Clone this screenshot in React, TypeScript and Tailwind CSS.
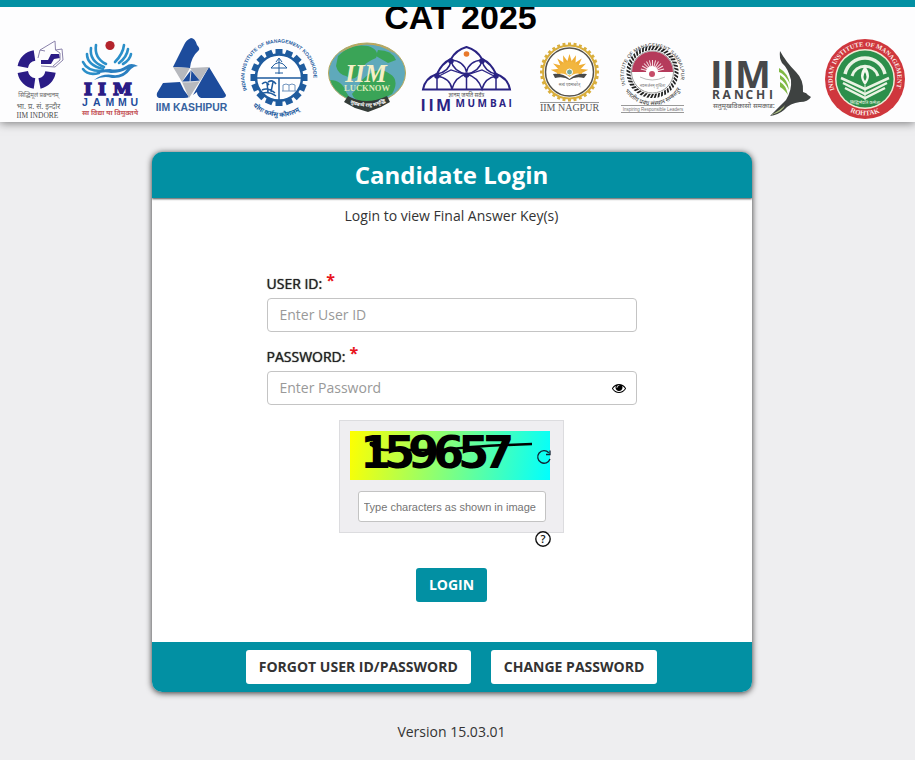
import React, { useState } from "react";

const NAVY = "#2b1c86";
const BLUE = "#1d4c9c";
const STEEL = "#1f5c9e";
const SERIF = "Liberation Serif, serif";
const SANS = "Liberation Sans, sans-serif";
const OPEN = "Open Sans, sans-serif";
const DEVA = "Noto Sans Devanagari, Noto Sans, sans-serif";

function ring(count: number, cx: number, cy: number, draw: (i: number) => React.ReactNode) {
  return Array.from({ length: count }, (_, i) => (
    <g key={i} transform={`rotate(${(i * 360) / count} ${cx} ${cy})`}>
      {draw(i)}
    </g>
  ));
}

function Indore() {
  return (
    <svg role="img" aria-label="IIM Indore" width="62" height="88" viewBox="10 34 62 88">
      <g fill="none" stroke={NAVY} strokeWidth="10.500">
        <path d="M34.500 55.500 A14 14 0 0 0 22.800 67" />
        <path d="M22.800 72 A14 14 0 0 0 34.500 83.500" />
        <path d="M39.500 83.500 A14 14 0 0 0 50.500 72" />
      </g>
      <path d="M41 64 V60 H48 L51 54 H59 L60 58 L54 59 L51 64 Z" fill={NAVY} />
      <g fill="none" stroke="#8b83ab" strokeWidth="1">
        <path d="M38 58 L40 50 L55 41 L55.500 50 L62 49 L63 60 L55 67 L41 66" />
        <path d="M40 50 L45 51 M55.500 50 L60 53 V60 L53 66" />
      </g>
      <text x="38.500" y="97" fontSize="6" textAnchor="middle" fill="#666" fontFamily={DEVA}>सिद्धिमूलं प्रबन्धनम्</text>
      <text x="38.500" y="109" fontSize="7.500" textAnchor="middle" fill="#666" fontFamily={DEVA}>भा. प्र. सं. इन्दौर</text>
      <text x="37.500" y="118" fontSize="7.500" textAnchor="middle" fill="#4b4b4b" fontFamily={SERIF}>IIM INDORE</text>
    </svg>
  );
}

function Jammu() {
  return (
    <svg role="img" aria-label="IIM Jammu" width="75" height="88" viewBox="72 34 75 88">
      <circle cx="110" cy="45.500" r="4.600" fill="#b4242c" />
      <g fill="none" stroke="#2b8fc9" strokeWidth="2.600" strokeLinecap="round">
        <path d="M96 45 Q94 58 106 64" />
        <path d="M91 48 Q89 61 104 67" />
        <path d="M87 54 Q87 65 103 69" />
        <path d="M83 62 Q87 71 101 71" />
        <path d="M83 69 Q88 76 99 73" />
        <path d="M124 45 Q123 54 115 62" />
        <path d="M128 49 Q127 57 119 63" />
        <path d="M131 54 Q130 60 123 64" />
      </g>
      <path d="M94 80 Q104 75 112 78 Q124 79 131 69 Q134 66 138 66 Q131 62 126 66 Q119 71 110 69 Q100 69 96 74 Q104 71 111 73 Q121 73 127 69 Q122 76 113 75 Q103 73 94 80 Z" fill="#2b7fc0" />
      <text x="84 98 113" y="95" fontSize="17" fontWeight="bold" fill={NAVY} stroke={NAVY} strokeWidth="1.500" fontFamily="DejaVu Serif, serif">IIM</text>
      <text x="82 93 105.500 118 130.500" y="105.500" fontSize="10.500" fontWeight="bold" fill={BLUE} fontFamily={SANS}>JAMMU</text>
      <text x="110" y="115" fontSize="7" fontWeight="bold" textAnchor="middle" fill="#c5575b" fontFamily={DEVA}>सा विद्या या विमुक्तये</text>
    </svg>
  );
}

function Kashipur() {
  return (
    <svg role="img" aria-label="IIM Kashipur" width="88" height="88" viewBox="147 34 88 88">
      <path d="M191 38 Q186 40 184 45 L173 67 L190 68 Q191 57 199 50 Q200 48 197 45 Q195 38 191 38 Z" fill={BLUE} />
      <path d="M157 93 L163 83 L180 82 Q183 90 189 97 Q188 98 184 98 L159 98 Q156 97 157 93 Z" fill={BLUE} />
      <path d="M209 67 L226 95 Q226 98 222 98 L201 98 Q197 96 197 92 L193 95 L202 79 Z" fill={BLUE} />
      <path d="M173 67 L190 68 L182 82 Z M190 68 L209 67 L200 81 Z M182 82 L200 81 L189 98 Z" fill="#b7b9be" />
      <path d="M191 70 L200 81 L182 82 Z" fill={BLUE} />
      <path d="M191 70 L190 82 L182 82 M190 82 L200 81" fill="none" stroke="#dadde3" strokeWidth="1" />
      <text x="191.500" y="110.500" fontSize="10.400" fontWeight="bold" textAnchor="middle" fill="#36629f" fontFamily={SANS}>IIM KASHIPUR</text>
    </svg>
  );
}

function Kozhikode() {
  return (
    <svg role="img" aria-label="IIM Kozhikode" width="87" height="88" viewBox="235 34 87 88">
      <path id="kozhi-top" d="M247 90 A34.500 34.500 0 1 1 311 90" fill="none" />
      <path id="kozhi-low" d="M253 106 A38 38 0 0 0 308 104" fill="none" />
      {ring(16, 279, 77.5, () => (
        <rect x="275.500" y="49" width="7" height="6" fill={STEEL} />
      ))}
      <circle cx="279" cy="77.500" r="23" fill="#fff" stroke={STEEL} strokeWidth="2.500" />
      <path d="M256 78 H302 M279 78 V100" stroke={STEEL} strokeWidth="1.500" />
      <g fill="none" stroke={STEEL} strokeWidth="1">
        <path d="M271 68 Q279 57 287 68 M271 68 H287 M279 59 V74 M276 62 L279 58 L282 62 M275 73 H283" />
        <path d="M262 84 Q266 80 269 85 M268 82 Q273 79 276 84 M267 83 L268 92 M273 82 L271 92 M262 90 Q268 87 275 93 M263 93 Q269 91 276 96" strokeWidth="1.500" />
        <path d="M283 91 V85 Q286 83 289 85 Q292 83 295 85 V91 M282 91 H296 M289 85 V91" stroke="#6f93bd" />
      </g>
      <text fontSize="5" fontWeight="bold" fill={STEEL} fontFamily={SANS}>
        <textPath href="#kozhi-top">INDIAN INSTITUTE OF MANAGEMENT KOZHIKODE</textPath>
      </text>
      <text fontSize="6.500" fontWeight="bold" fill={STEEL} fontFamily={DEVA}>
        <textPath href="#kozhi-low">योगः कर्मसु कौशलम्</textPath>
      </text>
    </svg>
  );
}

function Lucknow() {
  return (
    <svg role="img" aria-label="IIM Lucknow" width="92" height="88" viewBox="322 34 92 88">
      <clipPath id="lucknow-globe">
        <ellipse cx="367" cy="73" rx="38" ry="29.500" />
      </clipPath>
      <ellipse cx="367" cy="73" rx="38.500" ry="30" fill="#5fa9bb" stroke="#b9a95a" strokeWidth="1" />
      <g clipPath="url(#lucknow-globe)" fill="#3aa457">
        <path d="M338 56 Q350 43 368 46 Q380 50 376 58 Q366 62 362 68 Q356 84 346 76 Q338 74 336 66 Z" />
        <path d="M378 50 Q392 50 396 60 L388 63 L376 56 Z" />
        <path d="M362 80 Q378 64 390 74 Q400 80 392 94 L372 104 Q354 102 352 94 Q358 88 362 80 Z" />
        <path d="M330 80 Q342 80 346 92 L352 101 L338 98 Z" />
        <path d="M340 52 Q367 35 394 52" fill="none" stroke="#c9a652" strokeWidth="2" />
      </g>
      <text x="366" y="82" fontSize="25" fontWeight="bold" fontStyle="italic" textAnchor="middle" fill="#f5efc6" fontFamily={SERIF}>IIM</text>
      <text x="367" y="91" fontSize="8.500" fontWeight="bold" textAnchor="middle" fill="#dcebb9" fontFamily={SERIF}>LUCKNOW</text>
      <path d="M348 96 Q366 106 387 96 L390 102 L381 107 L368 112 L355 108 L344 102 Z" fill="#343c38" />
      <path id="lucknow-ribbon" d="M350 103 Q367 111 386 102" fill="none" />
      <text fontSize="5" fontWeight="bold" fill="#fff" fontFamily={DEVA}>
        <textPath href="#lucknow-ribbon">सुप्रबन्धे राष्ट्र समृद्धि</textPath>
      </text>
    </svg>
  );
}

function Mumbai() {
  return (
    <svg role="img" aria-label="IIM Mumbai" width="112" height="88" viewBox="414 34 112 88">
      <g fill="none" stroke="#2a2383" strokeWidth="2">
        <path d="M423 89.500 H510 Q508 78 496 74 Q491 63 482 59 Q477 50 466.500 47 Q456 50 451 59 Q442 63 437 74 Q425 78 423 89.500 Z" />
        <path d="M437 76 V89 M466.500 75 V89 M496 76 V89" strokeWidth="1.500" />
        <path d="M437 76 Q450 78 452 89 Q455 77 466.500 74 Q478 77 482 89 Q485 78 496 76" strokeWidth="1.500" />
        <path d="M437 74 Q449 72 451 61 Q454 72 466.500 74 Q479 72 482 61 Q485 72 496 74" strokeWidth="1.500" />
        <path d="M451 60 Q464 61 466.500 72 Q469 61 482 60" strokeWidth="1.500" />
        <path d="M439 76 L451 70 L466.500 75 L482 70 L494 76" strokeWidth="1.200" />
      </g>
      <g fill="#2a2383">
        <circle cx="451" cy="61" r="2.800" /><circle cx="482" cy="61" r="2.800" />
        <circle cx="437" cy="76" r="2.800" /><circle cx="466.500" cy="75" r="2.800" /><circle cx="496" cy="76" r="2.800" />
      </g>
      <circle cx="466.500" cy="54" r="2.800" fill="#e8792b" />
      <text x="466.500" y="96.500" fontSize="5.500" textAnchor="middle" fill="#555" fontFamily={DEVA}>ज्ञानम् जयति सर्वत्र</text>
      <text x="420.500 428.500 436" y="111" fontSize="16" fontWeight="bold" fill="#2a2383" fontFamily={OPEN}>IIM</text>
      <text x="455.500 467.500 477.500 490 499 508.500" y="106.500" fontSize="10" fontWeight="bold" fill="#2a2383" fontFamily={OPEN}>MUMBAI</text>
    </svg>
  );
}

function Nagpur() {
  return (
    <svg role="img" aria-label="IIM Nagpur" width="84" height="88" viewBox="526 34 84 88">
      {ring(32, 569.5, 72, () => (
        <rect x="568" y="42.500" width="3" height="4" fill="#d9ae3c" />
      ))}
      <circle cx="569.500" cy="72" r="26.500" fill="#fff" stroke="#d9ae3c" strokeWidth="2" />
      <circle cx="569.500" cy="72" r="24" fill="#fff" stroke="#55524a" strokeWidth="1.500" />
      {[-80, -60, -40, -20, 0, 20, 40, 60, 80].map((a) => (
        <path key={a} d="M566.500 64 L569.500 54 L572.500 64 Z" fill="#efae35" transform={`rotate(${a} 569.500 73)`} />
      ))}
      <path d="M557 74 A12.500 12.500 0 0 1 582 74 Q574 72 569.500 77 Q565 72 557 74 Z" fill="#f2b63f" />
      <circle cx="569.500" cy="72" r="3" fill="#74a99a" stroke="#fff" strokeWidth="1" />
      <path d="M553 74 Q563 73 569.500 79 Q576 73 587 74 L584 78 Q575 76 569.500 80 Q564 76 555 78 Z" fill="#4a4a48" />
      <text x="569.500" y="86" fontSize="4" textAnchor="middle" fill="#666" fontFamily={DEVA}>सत्यं एवमाचरेत्</text>
      <path d="M540 102.500 H599" stroke="#999" strokeWidth="1" />
      <text x="569.500" y="111" fontSize="10" textAnchor="middle" fill="#555" fontFamily={SERIF}>IIM NAGPUR</text>
    </svg>
  );
}

function Sambalpur() {
  return (
    <svg role="img" aria-label="IIM Sambalpur" width="88" height="88" viewBox="610 34 88 88">
      <path id="samb-top" d="M625.700 85 A28.500 28.500 0 1 1 679.300 85" fill="none" />
      <path id="samb-low" d="M625 91 A33 33 0 0 0 682 87" fill="none" />
      {ring(44, 652.5, 72, () => (
        <path d="M651 50 L653 50 L655 46 L653 46 Z" fill="#222" />
      ))}
      <circle cx="652.500" cy="72" r="21" fill="#fff" stroke="#999" strokeWidth="1" />
      <path d="M632 72 A20.500 20.500 0 0 1 673 72 Z" fill="#b53b5b" />
      {[-75, -60, -45, -30, -15, 0, 15, 30, 45, 60, 75].map((a) => (
        <path key={a} d="M652.500 68 V60" stroke="#f6dce2" strokeWidth="1" transform={`rotate(${a} 652.500 72)`} />
      ))}
      <path d="M646 72 A6 6 0 0 1 658 72 L654 75 H650 Z" fill="#fff" />
      <circle cx="652" cy="74" r="3" fill="#c64d69" />
      <path d="M640 77 Q652 83 665 77" fill="none" stroke="#bbb" strokeWidth="1" />
      <text x="652.500" y="87" fontSize="4" textAnchor="middle" fill="#777" fontFamily={DEVA}>नवसर्जनम् शुचिता</text>
      <text fontSize="5" fill="#333" fontFamily={SANS}>
        <textPath href="#samb-top">INSTITUTE OF MANAGEMENT SAMBALPUR</textPath>
      </text>
      <text fontSize="6" fill="#333" fontFamily={DEVA}>
        <textPath href="#samb-low">भारतीय प्रबंध संस्थान सम्बलपुर</textPath>
      </text>
      <path d="M621 105.500 H684 M621 112.500 H684" stroke="#999" strokeWidth="1" />
      <text x="653" y="111" fontSize="4.500" textAnchor="middle" fill="#777" fontFamily={SANS}>Inspiring Responsible Leaders</text>
    </svg>
  );
}

function Ranchi() {
  return (
    <svg role="img" aria-label="IIM Ranchi" width="120" height="88" viewBox="698 34 120 88">
      <text x="710 722 735" y="88" fontSize="38" fontWeight="bold" fill="#47484a" fontFamily={OPEN}>IIM</text>
      <text x="712 722.500 734 745.500 756 769" y="99" fontSize="12" fontWeight="bold" fill="#47484a" fontFamily={OPEN}>RANCHI</text>
      <text x="744" y="108" fontSize="7" textAnchor="middle" fill="#555" fontFamily={DEVA}>सतुमूखविकासो समकाड:</text>
      <path d="M780 51 Q786 62 796 72 Q804 80 803 92 Q807 93 808 95 L811 97 Q808 102 800 102 Q790 103 784 110 Q778 115 770 116 Q780 106 786 100 Q792 90 791 80 Q788 68 782 63 Q779 58 780 51 Z" fill="#3e4241" />
      <path d="M779 68 Q788 73 790 84 Q785 74 779 72 Z M780 75 Q788 80 789 90 Q785 82 780 79 Z M780 82 Q786 85 788 95 Q784 89 780 87 Z" fill="#80b944" />
      <path d="M771 115 Q782 109 785 105 Q783 112 771 115 Z" fill="#b2c486" />
    </svg>
  );
}

function Rohtak() {
  return (
    <svg role="img" aria-label="IIM Rohtak" width="92" height="88" viewBox="818 34 92 88">
      <path id="rohtak-top" d="M834.500 90 A32.500 32.500 0 1 1 895.500 90" fill="none" />
      <path id="rohtak-low" d="M850 112 A36 36 0 0 0 884 110" fill="none" />
      <circle cx="865" cy="79" r="40" fill="#cf373d" />
      <circle cx="865" cy="79" r="30" fill="#f1ead6" />
      <circle cx="865" cy="79" r="28.500" fill="#2c8f4b" />
      <g fill="none" stroke="#e9f3e3" strokeWidth="3.500">
        <path d="M845 74 A20.500 20.500 0 0 1 885 74" />
        <path d="M852 76 A13.500 13.500 0 0 1 878 76" strokeWidth="3" />
      </g>
      <path d="M865 66 Q873 76 865 85 Q857 76 865 66 Z" fill="#f4f8ee" />
      <path d="M865 72 Q868 77 865 81 Q862 77 865 72 Z" fill="#2c8f4b" />
      <g fill="none" stroke="#e9f3e3" strokeWidth="2.500">
        <path d="M841 78 L865 89 L889 78" />
        <path d="M843 83 L865 94 L887 83" />
        <path d="M845 88 L865 98 L885 88" />
        <path d="M865 85 V100" strokeWidth="1" />
      </g>
      <text x="865" y="104" fontSize="4.500" textAnchor="middle" fill="#eef5ea" fontFamily={DEVA}>सिद्धिर्भवति कर्मजा</text>
      <text fontSize="6.500" fontWeight="bold" fill="#fbe9e7" fontFamily={SERIF}>
        <textPath href="#rohtak-top">INDIAN INSTITUTE OF MANAGEMENT</textPath>
      </text>
      <text fontSize="7" fontWeight="bold" fill="#fbe9e7" fontFamily={SERIF}>
        <textPath href="#rohtak-low">ROHTAK</textPath>
      </text>
    </svg>
  );
}

function EyeIcon() {
  return (
    <svg width="14" height="14" viewBox="0 0 1792 1792" fill="currentColor" aria-hidden="true">
      <path d="M1664 960q-152-236-381-353 61 104 61 225 0 185-131.500 316.500t-316.500 131.500-316.500-131.500-131.500-316.500q0-121 61-225-229 117-381 353 133 205 333.500 326.500t434.500 121.500 434.500-121.500 333.500-326.500zm-720-384q0-20-14-34t-34-14q-125 0-214.500 89.500t-89.500 214.500q0 20 14 34t34 14 34-14 14-34q0-86 61-147t147-61q20 0 34-14t14-34zm848 384q0 34-20 69-140 230-376.500 368.500t-499.500 138.500-499.500-139-376.500-368q-20-35-20-69t20-69q140-229 376.500-368t499.500-139 499.500 139 376.500 368q20 35 20 69z" />
    </svg>
  );
}

function FieldLabel({ id, children }: { id: string; children: React.ReactNode }) {
  return (
    <label
      htmlFor={id}
      className="mb-1 flex h-5 items-center gap-1 text-sm leading-5 text-[#222] [text-shadow:0_0_1px_#222]"
    >
      {children}
      <span className="h-6 text-base leading-4 font-bold text-[#e8141c] [text-shadow:none]">*</span>
    </label>
  );
}

function Captcha() {
  return (
    <div className="w-[225px] border border-[#dcdcdf] bg-[#efeef1] p-2.5">
      <div className="relative h-[49px] w-[200px] bg-linear-100/srgb from-[#ffff00] to-[#00ffff]">
        <svg role="img" aria-label="Captcha" width="200" height="49" viewBox="0 0 200 49">
          <text x="10 34 58 83 108 133" y="37" fontSize="45" fontWeight="bold" fill="#000" fontFamily="DejaVu Sans, sans-serif">
            159657
          </text>
          <path d="M21 11 Q22 18 35 19 L95 19 Q120 15 182 13" fill="none" stroke="#000" strokeWidth="2.500" />
          <circle cx="22" cy="13" r="2.500" />
        </svg>
        <button type="button" aria-label="Refresh captcha" className="absolute top-[18px] -right-0.5 cursor-pointer">
          <svg width="16" height="16" viewBox="0 0 16 16" fill="none" stroke="#123" strokeWidth="1.300">
            <path d="M14 10 A6.300 6.300 0 1 1 12.800 3.800" />
            <path d="M14 1.500 V5.500 H10" />
          </svg>
        </button>
      </div>
      <input
        type="text"
        aria-label="Type characters as shown in image"
        placeholder="Type characters as shown in image"
        className="mt-[11px] ml-2 block h-[31px] w-[188px] rounded-[3px] border border-[#c3c3c3] bg-white px-[5px] font-['Liberation_Sans',Arial,sans-serif] text-[11px] placeholder:text-[#757575]"
      />
    </div>
  );
}

export default function App() {
  const [visible, setVisible] = useState(false);
  const field =
    "h-[34px] w-full rounded border border-[#c4c4c4] bg-white px-3 pb-0.5 text-sm text-[#555] placeholder:text-[#999]";

  return (
    <div className="min-h-screen bg-[#eeeef0] font-['Open_Sans','Noto_Sans',sans-serif] text-sm text-[#333]">
      <header className="border-t-[7px] border-[#0290a3] bg-[#fdfdfe] shadow-[0_1px_9px_rgba(0,0,0,0.5)]">
        <h1 className="overflow-hidden pb-[7px] pl-1.5 text-center font-['Liberation_Sans',Arial,sans-serif] text-[34px] leading-5 font-bold text-black">
          CAT 2025
        </h1>
        <div className="flex justify-between pr-[5px] pl-2.5">
          <Indore />
          <Jammu />
          <Kashipur />
          <Kozhikode />
          <Lucknow />
          <Mumbai />
          <Nagpur />
          <Sambalpur />
          <Ranchi />
          <Rohtak />
        </div>
      </header>

      <main className="flex flex-col items-center pt-[30px] pr-3 pb-4">
        <section className="w-full max-w-[600px] overflow-hidden rounded-[10px] bg-white shadow-[0_1px_6px_rgba(0,0,0,0.8)]">
          <h2 className="relative bg-[#0290a3] text-center text-2xl leading-[46px] font-bold text-white shadow-[0_1px_2px_rgba(0,0,0,0.7)]">
            Candidate Login
          </h2>
          <p className="pt-2 text-center leading-5">Login to view Final Answer Key(s)</p>

          <form className="mx-auto flex w-[370px] flex-col pt-12 pb-10" onSubmit={(e) => e.preventDefault()}>
            <FieldLabel id="user">USER ID:</FieldLabel>
            <input id="user" type="text" placeholder="Enter User ID" className={field} />
            <div className="h-[15px]" />
            <FieldLabel id="password">PASSWORD:</FieldLabel>
            <div className="relative">
              <input id="password" type={visible ? "text" : "password"} placeholder="Enter Password" className={field} />
              <button
                type="button"
                aria-label="Show password"
                onClick={() => setVisible(!visible)}
                className="absolute top-2.5 right-[11px] cursor-pointer text-black"
              >
                <EyeIcon />
              </button>
            </div>
            <div className="mx-auto mt-[15px] w-[226px]">
              <Captcha />
              <button type="button" aria-label="Help" className="relative -mt-0.5 mr-3.5 ml-auto block size-4 cursor-pointer">
                <svg width="16" height="16" viewBox="0 0 16 16" aria-hidden="true">
                  <circle cx="8" cy="8" r="7.200" fill="#fff" stroke="#111" strokeWidth="1.400" />
                  <text x="8" y="12" fontSize="11" fontWeight="600" textAnchor="middle" fill="#111" fontFamily={OPEN}>?</text>
                </svg>
              </button>
            </div>
            <button
              type="submit"
              className="mx-auto mt-[21px] h-[34px] cursor-pointer rounded-[3px] bg-[#0290a3] px-[13px] text-sm font-bold text-white"
            >
              LOGIN
            </button>
          </form>

          <div className="flex justify-center gap-5 bg-[#0290a3] py-2">
            <button type="button" className="h-[34px] cursor-pointer rounded-[3px] bg-white px-[13px] font-bold">
              FORGOT USER ID/PASSWORD
            </button>
            <button type="button" className="h-[34px] cursor-pointer rounded-[3px] bg-white px-[13px] font-bold">
              CHANGE PASSWORD
            </button>
          </div>
        </section>
        <p className="mt-[30px] leading-5">Version 15.03.01</p>
      </main>
    </div>
  );
}
